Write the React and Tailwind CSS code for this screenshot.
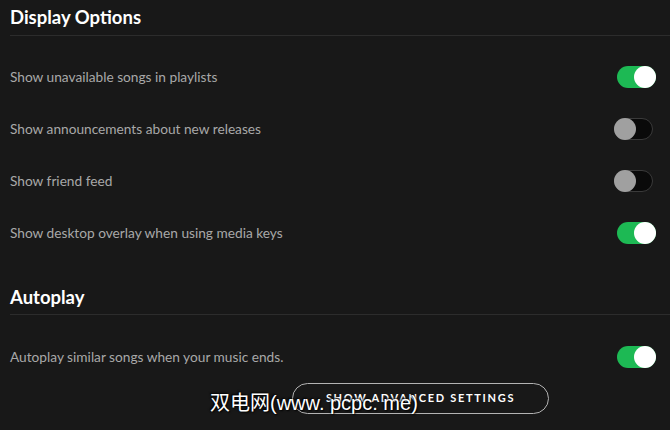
import React from 'react';

const display = [
  { label: 'Show unavailable songs in playlists', on: true },
  { label: 'Show announcements about new releases', on: false },
  { label: 'Show friend feed', on: false },
  { label: 'Show desktop overlay when using media keys', on: true },
];

function Toggle({ on }) {
  if (on) {
    return (
      <div className="relative w-[39px] h-[22px] rounded-full bg-[#1db954]">
        <div className="absolute right-0 top-0 w-[22px] h-[22px] rounded-full bg-white" />
      </div>
    );
  }
  return (
    <div className="relative w-[39px] h-[22px] rounded-full bg-[#0a0a0a] border border-[#3a3a3a] -translate-x-[3px]">
      <div className="absolute -left-px -top-px w-[22px] h-[22px] rounded-full bg-[#a0a0a0]" />
    </div>
  );
}

function Row({ label, on }) {
  return (
    <div className="flex items-center justify-between h-[52px] pr-[14px]">
      <span className="text-[13.7px] text-[#a8a8a8]">{label}</span>
      <Toggle on={on} />
    </div>
  );
}

export default function App() {
  return (
    <div
      className="relative w-[670px] h-[430px] overflow-hidden bg-[#181818] pl-[10px]"
      style={{ fontFamily: 'Lato, "Noto Sans", sans-serif' }}
    >
      <h2 className="pt-[6px] pb-[7px] text-[18.5px] font-bold text-white border-b border-[#2c2c2c] leading-[22px]">
        Display Options
      </h2>
      <div className="pt-[15px]">
        {display.map((r) => (
          <Row key={r.label} {...r} />
        ))}
      </div>
      <h2 className="mt-[27px] pb-[6px] text-[18.5px] font-bold text-white border-b border-[#2c2c2c] leading-[22px]">
        Autoplay
      </h2>
      <div className="pt-[16px]">
        <Row label="Autoplay similar songs when your music ends." on={true} />
      </div>
      <div className="flex">
        <button className="ml-[282px] w-[257px] h-[31px] rounded-full border border-[#b3b3b3] text-white text-[11px] font-bold tracking-[1.7px]">
          SHOW ADVANCED SETTINGS
        </button>
      </div>
      <div
        className="absolute left-[210px] top-[393px] text-[20px] text-white leading-none whitespace-pre"
        style={{
          fontFamily: '"Liberation Sans", "Noto Sans CJK SC", sans-serif',
          textShadow: '1px 1px 2px #000, -1px -1px 2px #000',
        }}
      >
        双电网(www. pcpc. me)
      </div>
    </div>
  );
}
